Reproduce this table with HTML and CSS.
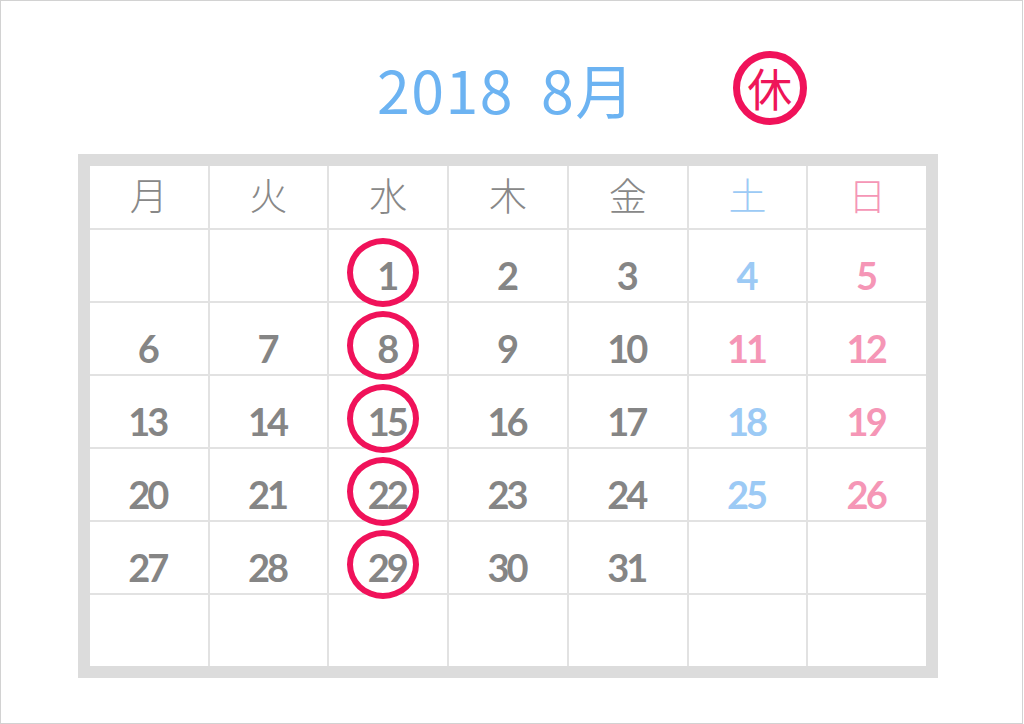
FILE: index.html
```html
<!DOCTYPE html>
<html lang="ja">
<head>
<meta charset="utf-8">
<title>2018 8月</title>
<link rel="stylesheet" href="styles.css">
</head>
<body>
<div class="page">
  <header class="head">
    <h1 class="title">2018<span class="month">8月</span></h1>
    <div class="kyu">休</div>
  </header>
  <div class="cal">
    <div class="grid">
      <div class="wd">月</div><div class="wd">火</div><div class="wd">水</div><div class="wd">木</div><div class="wd">金</div><div class="wd sat">土</div><div class="wd sun">日</div>

      <div class="d"></div><div class="d"></div><div class="d off">1</div><div class="d">2</div><div class="d">3</div><div class="d sat">4</div><div class="d sun">5</div>
      <div class="d">6</div><div class="d">7</div><div class="d off">8</div><div class="d">9</div><div class="d">10</div><div class="d sun">11</div><div class="d sun">12</div>
      <div class="d">13</div><div class="d">14</div><div class="d off">15</div><div class="d">16</div><div class="d">17</div><div class="d sat">18</div><div class="d sun">19</div>
      <div class="d">20</div><div class="d">21</div><div class="d off">22</div><div class="d">23</div><div class="d">24</div><div class="d sat">25</div><div class="d sun">26</div>
      <div class="d">27</div><div class="d">28</div><div class="d off">29</div><div class="d">30</div><div class="d">31</div><div class="d"></div><div class="d"></div>
      <div class="d"></div><div class="d"></div><div class="d"></div><div class="d"></div><div class="d"></div><div class="d"></div><div class="d"></div>
    </div>
  </div>
</div>
</body>
</html>
```
FILE: styles.css
```css
html, body {
  margin: 0;
  padding: 0;
  background: #ffffff;
}

.page {
  box-sizing: border-box;
  width: 1023px;
  height: 724px;
  border: 1px solid #d2d2d2;
  font-family: "Noto Sans CJK JP", "Noto Sans", sans-serif;
  overflow: hidden;
}

.head {
  display: flex;
  align-items: center;
  height: 153px;
  padding-left: 376px;
  box-sizing: border-box;
  padding-top: 22px;
}

.title {
  margin: 0;
  font-family: "Noto Sans CJK JP", sans-serif;
  font-weight: 400;
  font-size: 59px;
  line-height: 1;
  color: #6cb3f2;
  letter-spacing: 1.5px;
}

.month {
  margin-left: 27px;
}

.kyu {
  box-sizing: border-box;
  width: 74px;
  height: 74px;
  margin-left: 97px;
  margin-top: -2px;
  border: 7px solid #f0125a;
  border-radius: 50%;
  display: flex;
  align-items: center;
  justify-content: center;
  color: #ee1559;
  font-family: "Noto Sans CJK JP", sans-serif;
  font-size: 45px;
  font-weight: 400;
  line-height: 1;
}

.cal {
  box-sizing: border-box;
  width: 860px;
  height: 524px;
  margin-left: 77px;
  border: 12px solid #dcdcdc;
  background: #e0e0e0;
}

.grid {
  display: grid;
  grid-template-columns: repeat(7, 1fr);
  grid-template-rows: 62px repeat(6, 1fr);
  gap: 2px;
  height: 100%;
  background: #e2e2e2;
}

.wd {
  background: #fff;
  display: flex;
  align-items: center;
  justify-content: center;
  font-family: "Noto Sans CJK JP", sans-serif;
  font-weight: 300;
  font-size: 38px;
  line-height: 1;
  color: #888888;
  padding-bottom: 6px;
}

.d {
  position: relative;
  background: #fff;
  display: flex;
  align-items: center;
  justify-content: center;
  box-sizing: border-box;
  padding-top: 18px;
  padding-right: 3px;
  font-family: "Lato", sans-serif;
  font-weight: 700;
  font-size: 38px;
  line-height: 1;
  letter-spacing: -3px;
  color: #858585;
}

.sat { color: #9ccaf5; }
.sun { color: #f596b6; }

.off::before {
  content: "";
  position: absolute;
  z-index: 1;
  box-sizing: border-box;
  width: 72px;
  height: 69px;
  left: 50%;
  top: 50%;
  margin-left: -41px;
  margin-top: -28px;
  border: 6px solid #f0125a;
  border-radius: 50%;
}
```
